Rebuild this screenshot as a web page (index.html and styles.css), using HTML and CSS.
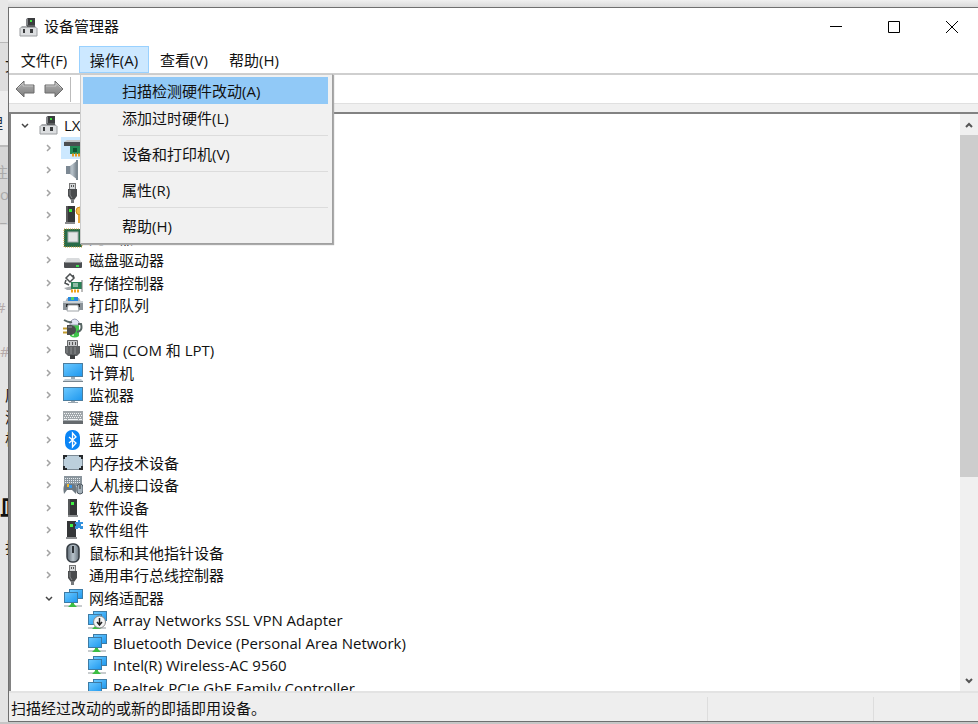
FILE: index.html
```
<!DOCTYPE html>
<html lang="zh-CN">
<head>
<meta charset="utf-8">
<title>设备管理器</title>
<link rel="stylesheet" href="styles.css">
</head>
<body>
<svg width="0" height="0" class="sprite" aria-hidden="true">
  <defs>
    <linearGradient id="screen" x1="0" y1="0" x2="1" y2="1">
      <stop offset="0" stop-color="#6cc9ff"/><stop offset="1" stop-color="#1d97ee"/>
    </linearGradient>
    <linearGradient id="steel" x1="0" y1="0" x2="1" y2="0">
      <stop offset="0" stop-color="#5b6670"/><stop offset=".5" stop-color="#b9c4cc"/><stop offset="1" stop-color="#66727c"/>
    </linearGradient>
    <linearGradient id="arrow" x1="0" y1="0" x2="0" y2="1">
      <stop offset="0" stop-color="#b5b5b5"/><stop offset="1" stop-color="#7d7d7d"/>
    </linearGradient>
    <symbol id="i-root" viewBox="0 0 20 20">
      <path d="M9 1h8v9H9z" fill="#3b3d3f"/><path d="M8 2l2-1v9H8z" fill="#85878a"/>
      <rect x="12" y="3" width="2" height="2" fill="#3fe03f"/>
      <path d="M4 9h13l2 2H2z" fill="#a9abae"/><path d="M9 8h8v2H9z" fill="#5c5e60"/>
      <rect x="2" y="11" width="17" height="8" fill="#dcdee0"/>
      <rect x="5" y="12" width="2" height="4" fill="#3a3c3e"/><rect x="12" y="12" width="3" height="4" fill="#3a3c3e"/>
      <path d="M2 11v8M19 11v8M2 19h17" stroke="#9a9da0"/>
    </symbol>
    <symbol id="i-display" viewBox="0 0 20 20">
      <path d="M1 4l3-2h16v3H1z" fill="#c3c6c9"/><rect x="1" y="4" width="19" height="4" fill="#4b4e51"/>
      <rect x="7" y="8" width="13" height="8" fill="#258a55"/><rect x="10" y="10" width="4" height="4" fill="#0e5230"/>
      <path d="M9 17h11" stroke="#e79a1d" stroke-width="3" stroke-dasharray="2 1"/>
    </symbol>
    <symbol id="i-sound" viewBox="0 0 20 20">
      <path d="M3 6h4l8-6v20l-8-6H3z" fill="url(#steel)"/><path d="M3 6h4v8H3z" fill="#7c8893"/><path d="M14 0v20" stroke="#7d8992" stroke-width="2"/>
    </symbol>
    <symbol id="i-usb" viewBox="0 0 20 20">
      <rect x="6.500" y=".5" width="6" height="6" fill="#d4d7d9" stroke="#777"/><path d="M8.500 2v2M10.500 2v2" stroke="#555"/>
      <path d="M5 6h9v7l-3 4H8l-3-4z" fill="#4a4c4e"/><path d="M7 7v5l2 3" stroke="#85888a" fill="none"/><rect x="8" y="16" width="3" height="4" fill="#777a7c"/>
    </symbol>
    <symbol id="i-security" viewBox="0 0 20 20">
      <path d="M3 1h9v16H3z" fill="#363839"/><path d="M3 1h2v16H3z" fill="#58595a"/><rect x="6" y="4" width="3" height="3" fill="#35e735"/><rect x="2" y="17" width="10" height="2" fill="#898b8d"/>
      <circle cx="17" cy="6" r="4" fill="#f7bd4c" stroke="#cf8d1d"/><path d="M15 10h4v8h-4z" fill="#eca83a"/>
    </symbol>
    <symbol id="i-cpu" viewBox="0 0 20 20">
      <rect x="1" y="1" width="18" height="18" fill="#276b48" stroke="#c79732" stroke-dasharray="1 1"/><rect x="5" y="4" width="10" height="10" fill="#e3e5e6" stroke="#a9afb0"/>
    </symbol>
    <symbol id="i-disk" viewBox="0 0 20 20">
      <path d="M4 8h12l3 5H1z" fill="#d9dbdd"/><rect x="1" y="12" width="18" height="6" rx="1" fill="#4b4e51"/><path d="M2 12.500h16" stroke="#8d9092"/><rect x="13" y="15" width="3" height="2" fill="#3edc50"/>
    </symbol>
    <symbol id="i-storage" viewBox="0 0 20 20">
      <path d="M7 1l4 4-4 4-4-4zM3 7l-1 3 4 2M11 5l-1-3" fill="none" stroke="#4c5052" stroke-width="1.500"/>
      <path d="M1 15l8-2v4H4z" fill="#a9adb0"/><path d="M8 9h11v7H8z" fill="#2a8157"/><path d="M10 10h5v4h-5z" fill="#8ebca6"/><path d="M19 7v12" stroke="#777"/><path d="M8 18h9" stroke="#f0a31a" stroke-width="3" stroke-dasharray="2 1"/>
    </symbol>
    <symbol id="i-printer" viewBox="0 0 20 20">
      <path d="M4 3h12l2 4H2z" fill="#a4b1ba"/><rect x="5" y="2" width="10" height="4" fill="#2688df"/><rect x="8" y="2" width="3" height="3" fill="#51d26b"/>
      <rect x="0" y="6" width="20" height="9" fill="#8b9399"/><rect x="0" y="6" width="20" height="2" fill="#c9cfd3"/><rect x="3" y="9" width="14" height="3" fill="#26292b"/><path d="M5 10h10l1 6H4z" fill="#fff" stroke="#9fa4a8"/>
    </symbol>
    <symbol id="i-battery" viewBox="0 0 20 20">
      <path d="M7 5q5-6 9 0v13q-4 3-9 0z" fill="#3fc44b"/><path d="M7 4q5-6 9 0v3H7z" fill="#dfe4f1" stroke="#969bb0"/><path d="M10 8v10" stroke="#b9f0b8" stroke-width="2"/>
      <path d="M1 2q5 3 8 2M14 14q6-1 4-8h-3" fill="none" stroke="#566563" stroke-width="2"/>
      <path d="M4 7h4q5 1 5 5t-5 5H4z" fill="#494c4d"/><path d="M5 9h4" stroke="#999"/><path d="M0 10.500h4M0 14.500h4" stroke="#c19b2e" stroke-width="2"/>
    </symbol>
    <symbol id="i-port" viewBox="0 0 20 20">
      <path d="M4.500 .5h10v6h-10z" fill="#c7c9cb" stroke="#67696b"/><path d="M6.500 2v3M9.500 2v3M12.500 2v3" stroke="#555"/>
      <path d="M2 6h15v7l-3 3H5l-3-3z" fill="#5e6163"/><path d="M4 7v6M8 7v7M12 7v7" stroke="#8d9092"/><rect x="7" y="15" width="5" height="4" fill="#3e4042"/>
    </symbol>
    <symbol id="i-computer" viewBox="0 0 20 20">
      <rect x=".5" y=".5" width="19" height="13" fill="url(#screen)" stroke="#4c7d9f"/><path d="M8 14h4v2H8z" fill="#9eabb5"/><path d="M2 16h16l2 2H0z" fill="#c3ced6"/><path d="M0 18.500h20" stroke="#79868f"/>
    </symbol>
    <symbol id="i-monitor" viewBox="0 0 20 20">
      <rect x=".5" y="2.500" width="19" height="13" fill="url(#screen)" stroke="#4c7d9f"/><path d="M8 16h4v1H8z" fill="#9eabb5"/><path d="M5 17.500h10" stroke="#98a5af"/>
    </symbol>
    <symbol id="i-keyboard" viewBox="0 0 20 20">
      <rect x="0" y="3" width="20" height="13" fill="#a0a6aa"/><path d="M1 5.500h18M2 7.500h17M1 9.500h18" stroke="#f2f4f5" stroke-dasharray="1 1"/><path d="M1 11.500h3M5 11.500h10M16 11.500h3" stroke="#f2f4f5"/><path d="M0 14.500h20" stroke="#656a6e" stroke-width="3"/>
    </symbol>
    <symbol id="i-bluetooth" viewBox="0 0 20 20">
      <rect x="2" y="0" width="15" height="20" rx="7" fill="#0a84f5"/><path d="M6 7l7 6-3.500 4V3L13 7l-7 6" fill="none" stroke="#fff" stroke-width="1.300"/>
    </symbol>
    <symbol id="i-memory" viewBox="0 0 20 20">
      <rect x=".5" y="2.500" width="19" height="14" rx="2" fill="#bccfdc" stroke="#7b8994"/><path d="M1 6V3h3M16 3h3v3M19 13v3h-3M4 16H1v-3" fill="none" stroke="#26292c" stroke-width="2"/>
    </symbol>
    <symbol id="i-hid" viewBox="0 0 20 20">
      <rect x="1" y="1" width="18" height="10" fill="#8a959d"/><path d="M2 3.500h16M2 5.500h16M2 7.500h16" stroke="#e7edf0" stroke-dasharray="1 1"/>
      <path d="M1 19Q-1 9 4 9h6q5 1 3 10l-4-4H4z" fill="#6d7880"/><rect x="4" y="9" width="2" height="3" fill="#f1b829"/><rect x="6" y="10" width="3" height="3" fill="#3396ed"/><rect x="14" y="9" width="6" height="10" rx="3" fill="#a3b0b9" stroke="#4e5962"/><path d="M17 10v4" stroke="#333"/>
    </symbol>
    <symbol id="i-software" viewBox="0 0 20 20">
      <path d="M5 1h9v16H5z" fill="#343638"/><path d="M5 1h2v16H5z" fill="#55585a"/><rect x="8" y="4" width="3" height="3" fill="#3ff043"/><rect x="5" y="17" width="10" height="2" fill="#8e9092"/>
    </symbol>
    <symbol id="i-component" viewBox="0 0 20 20">
      <path d="M4 1h9v16H4z" fill="#343638"/><rect x="7" y="4" width="3" height="3" fill="#3ff043"/><rect x="3" y="17" width="11" height="2" fill="#8e9092"/>
      <path d="M12 2h3V0h2v2h3v2h-2v2h2v3h-3V8h-2v1h-3V6h1V4h-1z" fill="#3492dc"/>
    </symbol>
    <symbol id="i-mouse" viewBox="0 0 20 20">
      <rect x="4" y="1" width="12" height="18" rx="5" fill="url(#steel)" stroke="#343b42" stroke-width="1.500"/><rect x="9" y="3" width="2" height="7" fill="#2b3035"/>
    </symbol>
    <symbol id="i-network" viewBox="0 0 20 20">
      <path d="M1 17h18v2H1z" fill="#c8ccce"/><path d="M8 14h3v2l3 3H5l3-3z" fill="#3bbd43"/>
      <rect x="6.500" y="1.500" width="13" height="9" fill="url(#screen)" stroke="#3d7ba5"/><rect x="1.500" y="4.500" width="13" height="10" fill="url(#screen)" stroke="#3d7ba5"/>
    </symbol>
    <symbol id="i-down" viewBox="0 0 20 20">
      <use href="#i-network" width="20" height="20"/><circle cx="12.500" cy="12" r="6" fill="#f4f4f4" stroke="#888"/><path d="M12.500 8v7M10 12l2.500 3 2.500-3" fill="none" stroke="#222" stroke-width="1.500"/>
    </symbol>
    <symbol id="i-right" viewBox="0 0 10 10"><path d="M3 2l3 3-3 3" fill="none" stroke="#a3a3a3" stroke-width="1.500"/></symbol>
    <symbol id="i-open" viewBox="0 0 10 10"><path d="M2 4l3 3 3-3" fill="none" stroke="#444" stroke-width="1.500"/></symbol>
    <symbol id="i-back" viewBox="0 0 20 18"><path d="M1 9l8-8v4h10v8H9v4z" fill="url(#arrow)" stroke="#6c6c6c"/><path d="M3 8l5-5v3h10" fill="none" stroke="#c4c4c4"/></symbol>
  </defs>
</svg>

<div class="backdrop" aria-hidden="true">
  <div class="block top">文</div>
  <div class="block tab-name"><span>理</span></div>
  <div class="block code"><span>注</span><br>oc<br>_1</div>
  <div class="block notes">
    <p class="tag">#</p>
    <p class="tag">&nbsp;#</p>
    <p class="row">原</p>
    <p class="row">添</p>
    <p class="row">板</p>
    <p class="heading">皿</p>
    <p class="row">打</p>
  </div>
</div>

<main class="window">
  <header class="titlebar">
    <svg class="icon"><use href="#i-root"/></svg>
    <h1>设备管理器</h1>
    <button class="control" aria-label="最小化"><svg viewBox="0 0 14 14"><path d="M1 6.500h12"/></svg></button>
    <button class="control" aria-label="最大化"><svg viewBox="0 0 14 14"><path d="M1.500 1.500h11v11h-11z"/></svg></button>
    <button class="control" aria-label="关闭"><svg viewBox="0 0 14 14"><path d="M1 1l12 12M13 1L1 13"/></svg></button>
  </header>

  <nav class="menubar">
    <button>文件(F)</button>
    <div class="menu-anchor">
      <button class="active" aria-expanded="true">操作(A)</button>
      <div class="menu" role="menu">
        <button role="menuitem" class="selected">扫描检测硬件改动(A)</button>
        <button role="menuitem">添加过时硬件(L)</button>
        <hr>
        <button role="menuitem">设备和打印机(V)</button>
        <hr>
        <button role="menuitem">属性(R)</button>
        <hr>
        <button role="menuitem">帮助(H)</button>
      </div>
    </div>
    <button>查看(V)</button>
    <button>帮助(H)</button>
  </nav>

  <div class="toolbar">
    <button aria-label="后退"><svg><use href="#i-back"/></svg></button>
    <button aria-label="前进" class="forward"><svg><use href="#i-back"/></svg></button>
    <span class="divider"></span>
  </div>

  <section class="content">
    <ul class="tree" role="tree">
      <li class="root"><svg class="twist"><use href="#i-open"/></svg><svg class="icon"><use href="#i-root"/></svg><span>LX</span></li>
      <li><svg class="twist"><use href="#i-right"/></svg><span class="focus"><svg class="icon"><use href="#i-display"/></svg></span></li>
      <li><svg class="twist"><use href="#i-right"/></svg><svg class="icon"><use href="#i-sound"/></svg></li>
      <li><svg class="twist"><use href="#i-right"/></svg><svg class="icon"><use href="#i-usb"/></svg></li>
      <li><svg class="twist"><use href="#i-right"/></svg><svg class="icon"><use href="#i-security"/></svg></li>
      <li><svg class="twist"><use href="#i-right"/></svg><svg class="icon"><use href="#i-cpu"/></svg><span>处理器</span></li>
      <li><svg class="twist"><use href="#i-right"/></svg><svg class="icon"><use href="#i-disk"/></svg><span>磁盘驱动器</span></li>
      <li><svg class="twist"><use href="#i-right"/></svg><svg class="icon"><use href="#i-storage"/></svg><span>存储控制器</span></li>
      <li><svg class="twist"><use href="#i-right"/></svg><svg class="icon"><use href="#i-printer"/></svg><span>打印队列</span></li>
      <li><svg class="twist"><use href="#i-right"/></svg><svg class="icon"><use href="#i-battery"/></svg><span>电池</span></li>
      <li><svg class="twist"><use href="#i-right"/></svg><svg class="icon"><use href="#i-port"/></svg><span>端口 (COM 和 LPT)</span></li>
      <li><svg class="twist"><use href="#i-right"/></svg><svg class="icon"><use href="#i-computer"/></svg><span>计算机</span></li>
      <li><svg class="twist"><use href="#i-right"/></svg><svg class="icon"><use href="#i-monitor"/></svg><span>监视器</span></li>
      <li><svg class="twist"><use href="#i-right"/></svg><svg class="icon"><use href="#i-keyboard"/></svg><span>键盘</span></li>
      <li><svg class="twist"><use href="#i-right"/></svg><svg class="icon"><use href="#i-bluetooth"/></svg><span>蓝牙</span></li>
      <li><svg class="twist"><use href="#i-right"/></svg><svg class="icon"><use href="#i-memory"/></svg><span>内存技术设备</span></li>
      <li><svg class="twist"><use href="#i-right"/></svg><svg class="icon"><use href="#i-hid"/></svg><span>人机接口设备</span></li>
      <li><svg class="twist"><use href="#i-right"/></svg><svg class="icon"><use href="#i-software"/></svg><span>软件设备</span></li>
      <li><svg class="twist"><use href="#i-right"/></svg><svg class="icon"><use href="#i-component"/></svg><span>软件组件</span></li>
      <li><svg class="twist"><use href="#i-right"/></svg><svg class="icon"><use href="#i-mouse"/></svg><span>鼠标和其他指针设备</span></li>
      <li><svg class="twist"><use href="#i-right"/></svg><svg class="icon"><use href="#i-usb"/></svg><span>通用串行总线控制器</span></li>
      <li><svg class="twist"><use href="#i-open"/></svg><svg class="icon"><use href="#i-network"/></svg><span>网络适配器</span></li>
      <li class="leaf"><svg class="icon"><use href="#i-down"/></svg><span>Array Networks SSL VPN Adapter</span></li>
      <li class="leaf"><svg class="icon"><use href="#i-network"/></svg><span>Bluetooth Device (Personal Area Network)</span></li>
      <li class="leaf"><svg class="icon"><use href="#i-network"/></svg><span>Intel(R) Wireless-AC 9560</span></li>
      <li class="leaf"><svg class="icon"><use href="#i-network"/></svg><span>Realtek PCIe GbE Family Controller</span></li>
    </ul>
    <div class="scrollbar">
      <button aria-label="向上滚动"><svg viewBox="0 0 10 8"><path d="M2 6l3-3 3 3"/></svg></button>
      <div class="track"><div class="thumb"></div></div>
      <button aria-label="向下滚动"><svg viewBox="0 0 10 8"><path d="M2 2l3 3 3-3"/></svg></button>
    </div>
  </section>

  <footer class="statusbar">
    <span class="message">扫描经过改动的或新的即插即用设备。</span>
    <span class="cell"></span>
    <span class="cell last"></span>
  </footer>
</main>
</body>
</html>
```
FILE: styles.css
```
* { box-sizing: border-box; }
body {
  margin: 0;
  height: 100vh;
  padding: 7px 0 2px 8px;
  overflow: hidden;
  background: #c6c6c6;
  font: 15px/20px "Open Sans", "Noto Sans CJK SC", sans-serif;
  color: #111;
}
.sprite { position: absolute; }
button { font: inherit; color: inherit; border: 0; padding: 0; background: none; }

/* The page that lies behind the window */
.backdrop {
  position: absolute;
  inset: 0 0 2px 0;
  overflow: hidden;
  background: linear-gradient(#f0f0f0, #dadada 7px, #e4e4e4 8px);
}
.block { width: 8px; overflow: hidden; white-space: nowrap; }
.top { height: 91px; padding: 55px 0 0 5px; background: linear-gradient(#e8e8e8 42px, #b8b8b8 42px, #b8b8b8 43px, #dedede 43px); }
.tab-name { height: 56px; padding-top: 22px; direction: rtl; background: #eee; border-bottom: 2px solid #bbb; color: #234; }
.tab-name span { margin-right: 5px; }
.code { height: 78px; margin-bottom: 72px; padding-top: 14px; line-height: 22px; background: #d6d6d6; color: #aaa; }
.code span { margin-left: -7px; }
.notes p { margin: 0; }
.notes .tag { height: 44px; margin-left: -4px; color: #b5aaaa; }
.notes .row { height: 22px; padding-left: 5px; }
.notes .heading { padding: 40px 0 16px; font-size: 22px; line-height: 30px; font-weight: 700; }

.window {
  position: relative;
  height: 100%;
  display: flex;
  flex-direction: column;
  border: 1px solid #6f6f6f;
  border-right: 0;
  background: #fff;
}
.icon { width: 20px; height: 20px; flex: none; }
.titlebar { display: flex; align-items: center; height: 38px; margin-right: -3px; padding-left: 9px; }
.titlebar h1 { flex: 1; margin: 0 0 0 6px; padding-bottom: 2px; font-size: 15px; font-weight: 400; }
.control { width: 58px; height: 38px; display: grid; place-items: center; }
.control svg { width: 14px; height: 14px; fill: none; stroke: #000; }
.menubar { display: flex; height: 29px; border-bottom: 2px solid #cfcfcf; }
.menubar > button, .menu-anchor > button { height: 27px; width: 70px; border: 1px solid transparent; }
.menu-anchor { position: relative; }
.menu-anchor > .active { background: #cce8ff; border-color: #99d1ff; }
.menu {
  position: absolute;
  z-index: 2;
  top: 28px;
  left: 1px;
  width: 253px;
  padding: 2px 4px 4px 2px;
  background: #f1f1f1;
  border: 1px solid #ccc;
  border-right-color: #a0a0a0;
  border-bottom-color: #a0a0a0;
  box-shadow: 1px 1px 1px #aaa;
}
.menu button { display: block; width: 100%; height: 27px; padding-left: 39px; text-align: left; }
.menu .selected { background: #91c9f7; }
.menu hr { margin: 4px 0 4px 35px; border: 0; border-top: 1px solid #dcdcdc; }
.toolbar { display: flex; align-items: center; height: 29px; padding-left: 6px; border-bottom: 1px solid #e0e0e0; }
.toolbar button { height: 18px; }
.toolbar svg { display: block; width: 20px; height: 18px; }
.toolbar .forward { margin: 0 6px 0 9px; transform: scaleX(-1); }
.toolbar .divider { height: 25px; border-left: 1px solid #bbb; }
.content {
  flex: 1;
  min-height: 0;
  display: flex;
  border-top: 8px solid #f0f0f0;
  box-shadow: inset 2px 2px #828282;
  padding: 2px 0 0 2px;
}
.tree {
  flex: 1;
  margin: 0;
  padding: 0;
  list-style: none;
  overflow: hidden;
  display: grid;
  grid-auto-rows: 22px 23px;
  align-content: start;
}
.tree li { display: flex; align-items: center; gap: 6px; padding-left: 33px; white-space: nowrap; }
.tree .root { padding-left: 9px; }
.tree .leaf { padding-left: 76px; }
.twist { width: 10px; height: 10px; flex: none; margin-right: 3px; }
.root .twist { margin-right: 2px; }
.focus { height: 22px; margin-left: -2px; padding-left: 2px; display: flex; align-items: center; background: #cce8ff; }
.scrollbar { width: 18px; display: flex; flex-direction: column; background: #f0f0f0; }
.scrollbar button { height: 21px; display: grid; place-items: center; }
.scrollbar svg { width: 10px; height: 8px; fill: none; stroke: #555; stroke-width: 2; }
.track { flex: 1; }
.thumb { height: 64%; background: #cdcdcd; }
.statusbar { display: flex; height: 30px; padding-top: 4px; border-top: 2px solid #e3e3e3; background: #eee; }
.message { flex: 1; padding: 1px 0 0 2px; }
.cell { width: 166px; border-left: 1px solid #ddd; }
.last { width: 105px; }
```
